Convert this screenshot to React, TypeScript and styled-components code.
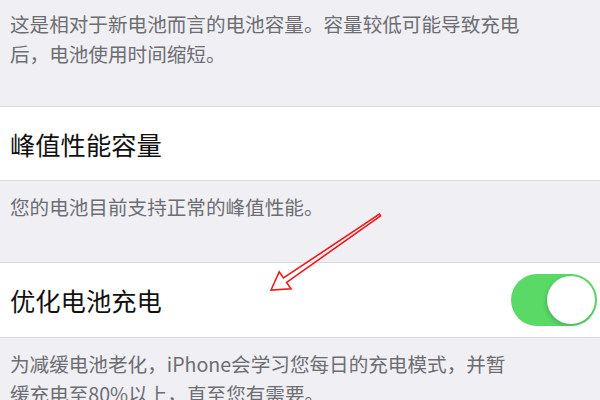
import styled, { createGlobalStyle } from "styled-components"

export default function App() {
	return (
		<>
			<GlobalStyle />
			<Page>
				<FooterText $top={9} $bottom={37}>
					这是相对于新电池而言的电池容量。容量较低可能导致充电
					<br />
					后，电池使用时间缩短。
				</FooterText>
				<SettingRow title="峰值性能容量" height={73} />
				<FooterText $top={11} $bottom={40}>
					您的电池目前支持正常的峰值性能。
				</FooterText>
				<SettingRow title="优化电池充电" height={74} toggle />
				<FooterText $top={11} $bottom={0}>
					为减缓电池老化，iPhone会学习您每日的充电模式，并暂
					<br />
					缓充电至80%以上，直至您有需要。
				</FooterText>
				<ArrowMark width="600" height="400" viewBox="0 0 600 400">
					<polygon
						points="380.6,215.8 286.6,282.4 291,288.8 271,290 279.2,271.8 283.4,278 379.4,214.2"
						fill="none"
						stroke="#f01818"
						strokeWidth="1.6"
						strokeLinejoin="miter"
					/>
				</ArrowMark>
			</Page>
		</>
	)
}

const SettingRow = ({ title, height, toggle }: { title: string; height: number; toggle?: boolean }) => {
	return (
		<Row $height={height}>
			<RowTitle>{title}</RowTitle>
			{toggle && (
				<Switch role="switch" aria-checked="true">
					<Knob />
				</Switch>
			)}
		</Row>
	)
}

//style

const GlobalStyle = createGlobalStyle`
	html, body {
		margin: 0;
		padding: 0;
		background: #efeff4;
		overflow: hidden;
	}
`

const Page = styled.div`
	position: relative;
	display: flex;
	flex-direction: column;
	width: 600px;
	height: 400px;
	overflow: hidden;
	background: #efeff4;
	font-family: "Noto Sans CJK SC", "Noto Sans", sans-serif;
`

const FooterText = styled.div<{ $top: number; $bottom: number }>`
	flex-shrink: 0;
	padding: ${(p) => p.$top}px 0 ${(p) => p.$bottom}px 10px;
	font-size: 19.6px;
	line-height: 30px;
	color: #6d6d72;
	white-space: nowrap;
`

const Row = styled.div<{ $height: number }>`
	flex-shrink: 0;
	display: flex;
	align-items: center;
	justify-content: space-between;
	height: ${(p) => p.$height}px;
	padding: 0 3px 0 10px;
	background: #fff;
	border-top: 1px solid #d9d9de;
	border-bottom: 1px solid #d9d9de;
`

const RowTitle = styled.div`
	font-size: 25.3px;
	color: #111;
`

const Switch = styled.div`
	position: relative;
	width: 86px;
	height: 52px;
	border-radius: 26px;
	background: #5ad967;
`

const Knob = styled.div`
	position: absolute;
	top: 2px;
	right: 2px;
	width: 48px;
	height: 48px;
	border-radius: 50%;
	background: #fff;
	box-shadow: -1px 2px 4px rgba(0, 0, 0, 0.18);
`

const ArrowMark = styled.svg`
	position: absolute;
	left: 0;
	top: 0;
	pointer-events: none;
`
